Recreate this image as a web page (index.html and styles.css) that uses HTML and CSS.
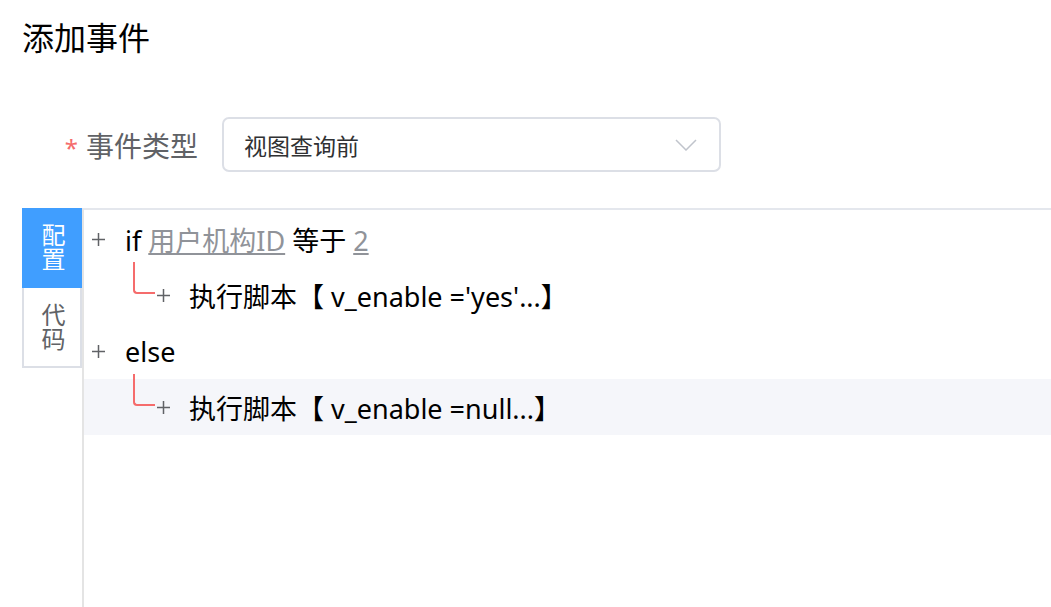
FILE: index.html
```html
<!DOCTYPE html>
<html lang="zh-CN">
<head>
    <meta charset="UTF-8">
    <title>添加事件</title>
    <link rel="stylesheet" href="styles.css">
</head>
<body>
    <div class="dialog">
        <h2 class="dialog-title">添加事件</h2>

        <div class="form-item">
            <label class="form-label"><span class="required">*</span>事件类型</label>
            <div class="select">
                <span class="select-value">视图查询前</span>
                <svg class="select-arrow" width="22" height="12" viewBox="0 0 22 12">
                    <path d="M1 1 L11 11 L21 1" fill="none" stroke="#c0c4cc" stroke-width="1.5"/>
                </svg>
            </div>
        </div>

        <div class="editor">
            <div class="tabs">
                <div class="tab active"><span class="tab-text">配置</span></div>
                <div class="tab"><span class="tab-text">代码</span></div>
            </div>
            <div class="tree">
                <div class="node">
                    <svg class="plus" width="13" height="13" viewBox="0 0 13 13"><path d="M6.5 0 V13 M0 6.5 H13" stroke="#606266" stroke-width="1.5"/></svg>
                    <span class="node-text">if <a class="link">用户机构ID</a> 等于 <a class="link">2</a></span>
                </div>
                <div class="node child">
                    <svg class="plus" width="13" height="13" viewBox="0 0 13 13"><path d="M6.5 0 V13 M0 6.5 H13" stroke="#606266" stroke-width="1.5"/></svg>
                    <span class="node-text">执行脚本【 v_enable ='yes'...】</span>
                </div>
                <div class="node">
                    <svg class="plus" width="13" height="13" viewBox="0 0 13 13"><path d="M6.5 0 V13 M0 6.5 H13" stroke="#606266" stroke-width="1.5"/></svg>
                    <span class="node-text">else</span>
                </div>
                <div class="node child hover">
                    <svg class="plus" width="13" height="13" viewBox="0 0 13 13"><path d="M6.5 0 V13 M0 6.5 H13" stroke="#606266" stroke-width="1.5"/></svg>
                    <span class="node-text">执行脚本【 v_enable =null...】</span>
                </div>
            </div>
        </div>
    </div>
</body>
</html>
```

FILE: styles.css
```css
html, body {
    margin: 0;
    height: 100%;
    overflow: hidden;
}
body {
    font-family: "Noto Sans", "Noto Sans CJK SC", sans-serif;
    background: #fff;
    color: #000;
}
.dialog {
    display: flex;
    flex-direction: column;
    height: 100%;
}
.dialog-title {
    margin: 0;
    padding: 15px 0 0 22px;
    font-size: 32px;
    font-weight: normal;
    line-height: 45px;
    color: #000;
}
.form-item {
    display: flex;
    align-items: center;
    margin-top: 57px;
}
.form-label {
    width: 222px;
    padding-right: 24px;
    box-sizing: border-box;
    text-align: right;
    font-size: 28px;
    color: #606266;
}
.required {
    color: #f56c6c;
    margin-right: 8px;
    font-size: 24px;
}
.select {
    width: 499px;
    height: 55px;
    box-sizing: border-box;
    border: 2px solid #dcdfe6;
    border-radius: 7px;
    display: flex;
    align-items: center;
    justify-content: space-between;
    padding: 0 22px 0 20px;
}
.select-value {
    font-size: 23px;
    color: #303133;
}
.editor {
    flex: 1;
    display: flex;
    margin-top: 36px;
}
.tabs {
    width: 60px;
    margin-left: 22px;
}
.tab {
    height: 80px;
    box-sizing: border-box;
    border: 2px solid #dcdfe6;
    border-top: none;
    display: flex;
    align-items: center;
    justify-content: center;
    font-size: 24px;
    color: #606266;
}
.tab-text {
    writing-mode: vertical-rl;
    text-orientation: upright;
    line-height: 1;
}
.tab.active {
    background: #409eff;
    border-color: #409eff;
    color: #fff;
}
.tree {
    flex: 1;
    border-left: 2px solid #e4e4e4;
    border-top: 2px solid #e4e7ed;
    padding-top: 1px;
}
.node {
    position: relative;
    height: 56px;
    display: flex;
    align-items: center;
    padding-left: 8px;
    font-size: 27px;
}
.node .plus {
    margin-right: 20px;
}
.node.child {
    padding-left: 73px;
}
.node.child::before {
    content: "";
    position: absolute;
    left: 49px;
    top: -5px;
    width: 20px;
    height: 30px;
    border-left: 2px solid #f56c6c;
    border-bottom: 2px solid #f56c6c;
    border-bottom-left-radius: 4px;
}
.node.child .plus {
    margin-right: 19px;
}
.node.hover {
    background: #f5f6fa;
}
.node-text {
    color: #000;
}
.link {
    color: #909399;
    text-decoration: underline;
}
```
